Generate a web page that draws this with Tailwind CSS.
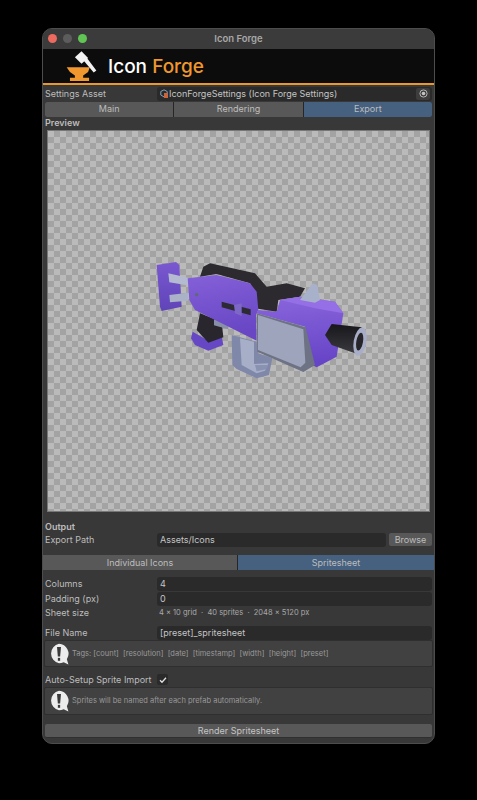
<!DOCTYPE html>
<html lang="en">
<head>
    <meta charset="UTF-8">
    <meta name="viewport" content="width=device-width, initial-scale=1.0">
    <title>Icon Forge</title>
    <script src="https://cdn.jsdelivr.net/npm/@tailwindcss/browser@4"></script>
</head>
<body class="bg-black h-[800px] overflow-hidden font-['Inter',sans-serif] text-[9px] text-[#bdbdbd]">
    <div class="ml-[42px] mt-[28px] w-[393px] h-[716px] rounded-[10px] bg-[#383838] border border-[#4d4d4d] overflow-hidden flex flex-col">
        <!-- title bar -->
        <div class="relative h-[20px] shrink-0 bg-[#3b3b3b] flex items-center justify-center text-[9.5px] font-semibold text-[#a8a8a8]">
            <div class="absolute left-[5px] top-[5px] flex gap-[6px]">
                <span class="w-[9px] h-[9px] rounded-full bg-[#ec6a5e]"></span>
                <span class="w-[9px] h-[9px] rounded-full bg-[#5c5c5c]"></span>
                <span class="w-[9px] h-[9px] rounded-full bg-[#61c554]"></span>
            </div>
            Icon Forge
        </div>
        <!-- banner -->
        <div class="h-[34px] shrink-0 bg-[#0c0c0c] flex items-center pl-[22px] gap-[10px]">
            <svg class="w-[33px] h-[33px] shrink-0" viewBox="105 88 100 100">
                <path fill="#f0982e" d="M110 140H180L175 155 160 165V172H178V182H120V172H135V165L120 155Z"/>
                <path fill="#f2f2f2" d="M135 110 155 92 175 112 155 130Z"/>
                <path fill="#f2f2f2" d="M160 118 168 108 200 150 192 156Z"/>
            </svg>
            <div class="text-[19px] leading-none font-medium text-white">Icon <span class="text-[#f0982e]">Forge</span></div>
        </div>
        <div class="h-[2px] shrink-0 bg-[#e8982f]"></div>
        <!-- settings asset -->
        <div class="h-[15px] shrink-0 mt-[1px] flex items-center px-[2px]">
            <span class="w-[112px] shrink-0">Settings Asset</span>
            <div class="flex-1 h-[14px] rounded-[3px] bg-[#2a2a2a] flex items-center justify-between pl-[3px] pr-[2px] text-[#c4c4c4]">
                <span class="flex items-center">
                    <svg class="w-[9px] h-[9px]" viewBox="0 0 9 9"><path fill="none" stroke="#7fa3bd" d="M4 .8 7.2 2.5V6L4 7.9.8 6V2.5Z"/><rect x="4" y="4" width="4" height="5" fill="#c9653a"/></svg>
                    <span>IconForgeSettings (Icon Forge Settings)</span>
                </span>
                <span class="w-[14px] h-[12px] rounded-[2px] bg-[#3d3d3d] flex items-center justify-center">
                    <svg class="w-[9px] h-[9px]" viewBox="0 0 10 10"><circle cx="5" cy="5" r="4" fill="none" stroke="#c4c4c4"/><circle cx="5" cy="5" r="2" fill="#c4c4c4"/></svg>
                </span>
            </div>
        </div>
        <!-- main tabs -->
        <div class="h-[15px] shrink-0 mt-[1px] mx-[2px] grid grid-cols-3 gap-px bg-[#262626] rounded-[2px] overflow-hidden text-center leading-[14px]">
            <div class="bg-[#585858]">Main</div>
            <div class="bg-[#585858]">Rendering</div>
            <div class="bg-[#46607f]">Export</div>
        </div>
        <div class="shrink-0 pl-[2px] h-[11px] leading-[11px] font-semibold">Preview</div>
        <!-- preview -->
        <div class="relative shrink-0 ml-[4px] mt-[2px] w-[383px] h-[382px] bg-[repeating-conic-gradient(#a3a3a3_0_25%,#bababa_0_50%)] bg-[size:12px_12px] border border-[#777]">
            <svg class="absolute left-[92px] top-[119px] w-[240px] h-[140px] blur-[0.5px]" viewBox="0 0 720 420">
                <defs>
                    <linearGradient id="bodyL" x1="0" y1="0" x2="0.2" y2="1"><stop offset="0" stop-color="#8460d8"/><stop offset="1" stop-color="#6846c4"/></linearGradient>
                    <linearGradient id="bodyR" x1="0" y1="0" x2="0.1" y2="1"><stop offset="0" stop-color="#8a66dc"/><stop offset="1" stop-color="#6644c6"/></linearGradient>
                    <linearGradient id="stock" x1="0" y1="0" x2="0" y2="1"><stop offset="0" stop-color="#7a58d0"/><stop offset="1" stop-color="#5f44b8"/></linearGradient>
                    <linearGradient id="barrel" x1="0" y1="0" x2="0" y2="1"><stop offset="0" stop-color="#17161a"/><stop offset="1" stop-color="#3a393f"/></linearGradient>
                </defs>
                <!-- stock -->
                <path fill="url(#stock)" d="M50 45 108 36 118 45 125 170 65 183 60 170Z"/>
                <path fill="#b4bbd0" d="M85 70 150 85 150 107 88 97Z"/>
                <path fill="#aab2c8" d="M88 135 145 128 145 152 90 157Z"/>
                <!-- magazine -->
                <path fill="#8088aa" d="M275 255 350 275 355 310 397 325 387 375 350 385 290 357 277 345Z"/>
                <path fill="#a6aec8" d="M300 265 342 275 342 342 385 340 375 362 350 370 305 345Z"/>
                <path fill="#8a92b2" d="M345 345 385 345 378 358 350 364Z"/>
                <!-- grip -->
                <path fill="#6647c4" d="M158 245 205 272 245 258 250 285 205 302 165 285 153 265Z"/>
                <path fill="#29272d" d="M180 190 245 215 250 262 205 278 170 240Z"/>
                <path fill="#8890a8" d="M222 208 265 220 265 238 222 226Z"/>
                <!-- top rail -->
                <path fill="#2c2a2f" d="M180 80 190 50 210 40 345 70 380 110 440 100 495 115 480 140 415 150 410 185 345 175 340 120 330 100 230 72Z"/>
                <!-- body -->
                <path fill="url(#bodyL)" d="M143 85 230 75 330 100 350 125 355 180 348 195 350 272 165 180 148 150Z"/>
                <path fill="url(#bodyR)" d="M420 150 480 140 585 155 610 190 590 320 530 352 505 340 495 230 350 190 355 180 410 185Z"/>
                <path fill="#946fe6" d="M420 150 480 140 585 155 610 190 525 175Z"/>
                <!-- plate -->
                <path fill="#6d7284" d="M350 190 497 232 525 345 490 366 352 305Z"/>
                <path fill="#9ea4bc" d="M354 195 490 238 496 338 482 352 354 300Z"/>
                <!-- barrel -->
                <path fill="url(#barrel)" d="M575 222 665 232 645 310 575 285 555 255Z"/>
                <ellipse cx="660" cy="275" rx="19" ry="43" transform="rotate(10 660 275)" fill="#a8aec8"/>
                <ellipse cx="659" cy="275" rx="10" ry="27" transform="rotate(10 659 275)" fill="#26252a"/>
                <!-- sight -->
                <path fill="#a7b1c9" d="M480 150 518 100 532 105 540 150 525 158Z"/>
                <!-- selector -->
                <path fill="#2c2a33" d="M245 155 332 178 332 196 245 172Z"/>
                <path fill="#7d68c8" d="M282 165 305 160 305 198 285 190Z"/>
                <circle cx="170" cy="134" r="5" fill="#5f6a70"/>
            </svg>
        </div>
        <!-- output -->
        <div class="shrink-0 mt-[9px] pl-[2px] h-[11px] leading-[11px] font-semibold">Output</div>
        <div class="h-[15px] shrink-0 flex items-center px-[2px]">
            <span class="w-[112px] shrink-0">Export Path</span>
            <div class="flex-1 h-[14px] rounded-[3px] bg-[#2a2a2a] pl-[3px] leading-[14px] text-[#c4c4c4]">Assets/Icons</div>
            <div class="ml-[3px] w-[43px] h-[13px] rounded-[2px] bg-[#585858] text-center leading-[13px]">Browse</div>
        </div>
        <!-- output tabs -->
        <div class="h-[15px] shrink-0 mt-[8px] grid grid-cols-[194px_1fr] gap-px bg-[#262626] text-center leading-[15px]">
            <div class="bg-[#585858]">Individual Icons</div>
            <div class="bg-[#46607f]">Spritesheet</div>
        </div>
        <div class="h-[15px] shrink-0 mt-[6px] flex items-center px-[2px]">
            <span class="w-[112px] shrink-0">Columns</span>
            <div class="flex-1 h-[14px] rounded-[3px] bg-[#2a2a2a] pl-[3px] leading-[14px] text-[#c4c4c4]">4</div>
        </div>
        <div class="h-[15px] shrink-0 flex items-center px-[2px]">
            <span class="w-[112px] shrink-0">Padding (px)</span>
            <div class="flex-1 h-[14px] rounded-[3px] bg-[#2a2a2a] pl-[3px] leading-[14px] text-[#c4c4c4]">0</div>
        </div>
        <div class="h-[14px] shrink-0 flex items-center px-[2px]">
            <span class="w-[114px] shrink-0">Sheet size</span>
            <span class="text-[7.5px] text-[#a8a8a8] whitespace-pre">4 × 10 grid  ·  40 sprites  ·  2048 × 5120 px</span>
        </div>
        <div class="h-[15px] shrink-0 mt-[5px] flex items-center px-[2px]">
            <span class="w-[112px] shrink-0">File Name</span>
            <div class="flex-1 h-[14px] rounded-[3px] bg-[#2a2a2a] pl-[3px] leading-[14px] text-[#c4c4c4]">[preset]_spritesheet</div>
        </div>
        <!-- help box -->
        <div class="h-[27px] shrink-0 mx-[1px] pl-[3px] flex items-center gap-[2px] bg-[#414141] border border-[#2f2f2f] rounded-[2px] text-[7.5px] text-[#999] whitespace-pre">
            <svg class="w-[22px] h-[22px] shrink-0" viewBox="0 0 21 21"><path fill="#ececec" d="M10.5 .8A9.5 9.5 0 0 0 10.5 19.4C12 19.4 13.5 19 15 18.3L19.5 20.5 18 15.5A9.5 9.5 0 0 0 10.5 .8Z"/><path fill="#3a3a3a" d="M8.6 3.8H12.4L11.6 12.8H9.4Z"/><rect x="9.4" y="14.2" width="2.2" height="2.8" fill="#3a3a3a"/></svg>
            <span>Tags: [count]  [resolution]  [date]  [timestamp]  [width]  [height]  [preset]</span>
        </div>
        <div class="h-[15px] shrink-0 mt-[5px] flex items-center px-[2px]">
            <span class="w-[112px] shrink-0 whitespace-nowrap">Auto-Setup Sprite Import</span>
            <div class="w-[11px] h-[11px] rounded-[2px] bg-[#2a2a2a] flex items-center justify-center">
                <svg class="w-[8px] h-[8px]" viewBox="0 0 8 8"><path fill="none" stroke="#e0e0e0" stroke-width="1.3" d="M1 4.2 3 6.2 7 1.8"/></svg>
            </div>
        </div>
        <div class="h-[28px] shrink-0 mx-[1px] pl-[3px] flex items-center gap-[2px] bg-[#414141] border border-[#2f2f2f] rounded-[2px] text-[7.5px] text-[#999]">
            <svg class="w-[22px] h-[22px] shrink-0" viewBox="0 0 21 21"><path fill="#ececec" d="M10.5 .8A9.5 9.5 0 0 0 10.5 19.4C12 19.4 13.5 19 15 18.3L19.5 20.5 18 15.5A9.5 9.5 0 0 0 10.5 .8Z"/><path fill="#3a3a3a" d="M8.6 3.8H12.4L11.6 12.8H9.4Z"/><rect x="9.4" y="14.2" width="2.2" height="2.8" fill="#3a3a3a"/></svg>
            <span>Sprites will be named after each prefab automatically.</span>
        </div>
        <div class="h-[14px] shrink-0 mt-[9px] mx-[2px] rounded-[2px] bg-[#585858] border-b border-[#2f2f2f] text-center leading-[13px] text-[#c4c4c4]">Render Spritesheet</div>
    </div>
</body>
</html>
